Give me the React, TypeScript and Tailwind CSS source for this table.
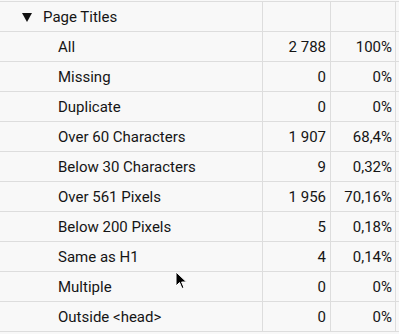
const rows: { label: string; count: string; pct: string }[] = [
  { label: 'All', count: '2 788', pct: '100%' },
  { label: 'Missing', count: '0', pct: '0%' },
  { label: 'Duplicate', count: '0', pct: '0%' },
  { label: 'Over 60 Characters', count: '1 907', pct: '68,4%' },
  { label: 'Below 30 Characters', count: '9', pct: '0,32%' },
  { label: 'Over 561 Pixels', count: '1 956', pct: '70,16%' },
  { label: 'Below 200 Pixels', count: '5', pct: '0,18%' },
  { label: 'Same as H1', count: '4', pct: '0,14%' },
  { label: 'Multiple', count: '0', pct: '0%' },
  { label: 'Outside <head>', count: '0', pct: '0%' },
];

const Row = (props: { children: React.ReactNode; count?: string; pct?: string }) => {
  return (
    <div className="flex h-[30px] border-t border-[#dddddd]">
      <div className="flex w-[263px] items-center border-r border-[#dddddd] pt-px">{props.children}</div>
      <div className="flex w-[68px] items-center justify-end border-r border-[#dddddd] pt-px pr-[4px]">
        {props.count}
      </div>
      <div className="flex w-[65px] items-center justify-end border-r border-[#dddddd] pt-px pr-[3px]">
        {props.pct}
      </div>
    </div>
  );
};

export default function App() {
  return (
    <div className="relative h-[334px] w-[399px] overflow-hidden bg-[#f8f8f8] pt-px font-['Roboto',sans-serif] text-[15px] text-[#151515]">
      {/* section header */}
      <Row>
        <svg className="ml-[22px] mr-[11px]" width="10" height="9" viewBox="0 0 10 9">
          <polygon points="0,0 10,0 5,9" fill="#111" />
        </svg>
        <span>Page Titles</span>
      </Row>
      {rows.map((r) => (
        <Row key={r.label} count={r.count} pct={r.pct}>
          <span className="pl-[58px]">{r.label}</span>
        </Row>
      ))}
      <div className="h-[30px] border-t border-[#dddddd]" />

      {/* mouse pointer */}
      <svg className="absolute left-[175px] top-[271px]" width="13" height="20" viewBox="0 0 13 20">
        <path d="M1 1 L1 15 L4.5 11.5 L7 17.5 L9 16.6 L6.6 11 L11.5 11 Z" fill="#000" stroke="#fff" strokeWidth="1" />
      </svg>
    </div>
  );
}
